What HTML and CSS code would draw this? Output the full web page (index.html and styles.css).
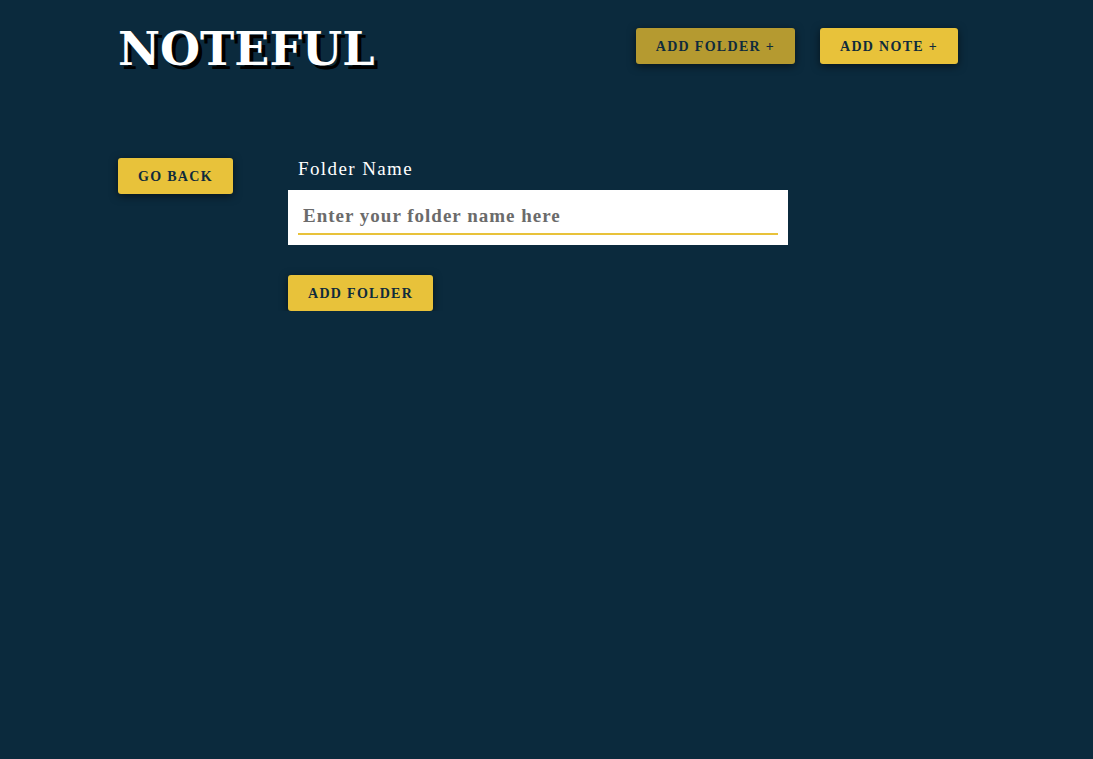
FILE: index.html
```html
<!DOCTYPE html>
<html lang="en">
<head>
<meta charset="utf-8">
<title>Noteful</title>
<link rel="stylesheet" href="styles.css">
</head>
<body>
<header class="header">
  <h1 class="logo">NOTEFUL</h1>
  <nav class="nav">
    <button class="btn btn-active">ADD FOLDER +</button>
    <button class="btn">ADD NOTE +</button>
  </nav>
</header>
<main class="main">
  <aside class="sidebar">
    <button class="btn">GO BACK</button>
  </aside>
  <form class="form">
    <label class="label" for="folder">Folder Name</label>
    <div class="field">
      <input id="folder" class="input" type="text" placeholder="Enter your folder name here">
    </div>
    <div class="actions">
      <button class="btn" type="button">ADD FOLDER</button>
    </div>
  </form>
</main>
</body>
</html>
```
FILE: styles.css
```css
html, body {
  margin: 0;
  padding: 0;
  background: #0b2a3d;
  min-height: 100%;
}
body {
  font-family: "Liberation Serif", serif;
  color: #ffffff;
}
.header {
  display: flex;
  align-items: center;
  justify-content: space-between;
  padding: 28px 135px 0 118px;
  height: 36px;
}
.logo {
  margin: 0;
  font-family: "DejaVu Serif", serif;
  font-weight: bold;
  font-size: 46px;
  line-height: 36px;
  letter-spacing: 0;
  color: #ffffff;
  text-shadow: 4px 4px 0 #000000;
  position: relative;
  top: 3px;
}
.nav {
  display: flex;
  gap: 25px;
}
.btn {
  font-family: "Liberation Serif", serif;
  font-weight: bold;
  font-size: 14px;
  letter-spacing: 1.3px;
  color: #0f2b3c;
  background: #e8c23a;
  border: none;
  border-radius: 3px;
  height: 36px;
  padding: 2px 20px 0;
  box-shadow: 0 2px 8px rgba(0, 0, 0, 0.55);
  cursor: pointer;
}
.btn-active {
  background: #b59a30;
}
.main {
  display: flex;
  padding: 94px 118px 0 118px;
}
.sidebar {
  width: 170px;
  flex: none;
}
.form {
  width: 500px;
  display: flex;
  flex-direction: column;
}
.label {
  font-size: 19px;
  line-height: 22px;
  padding: 0 0 10px 10px;
  letter-spacing: 1.4px;
}
.field {
  background: #ffffff;
  padding: 10px;
}
.input {
  display: block;
  width: 100%;
  box-sizing: border-box;
  height: 35px;
  border: none;
  border-bottom: 2px solid #e8c23a;
  outline: none;
  padding: 0 5px 2px;
  font-family: "Liberation Serif", serif;
  font-size: 19px;
  letter-spacing: 1px;
  color: #333;
  background: #ffffff;
}
.input::placeholder {
  color: #6b6b6b;
  font-weight: bold;
}
.actions {
  margin-top: 30px;
}
```
